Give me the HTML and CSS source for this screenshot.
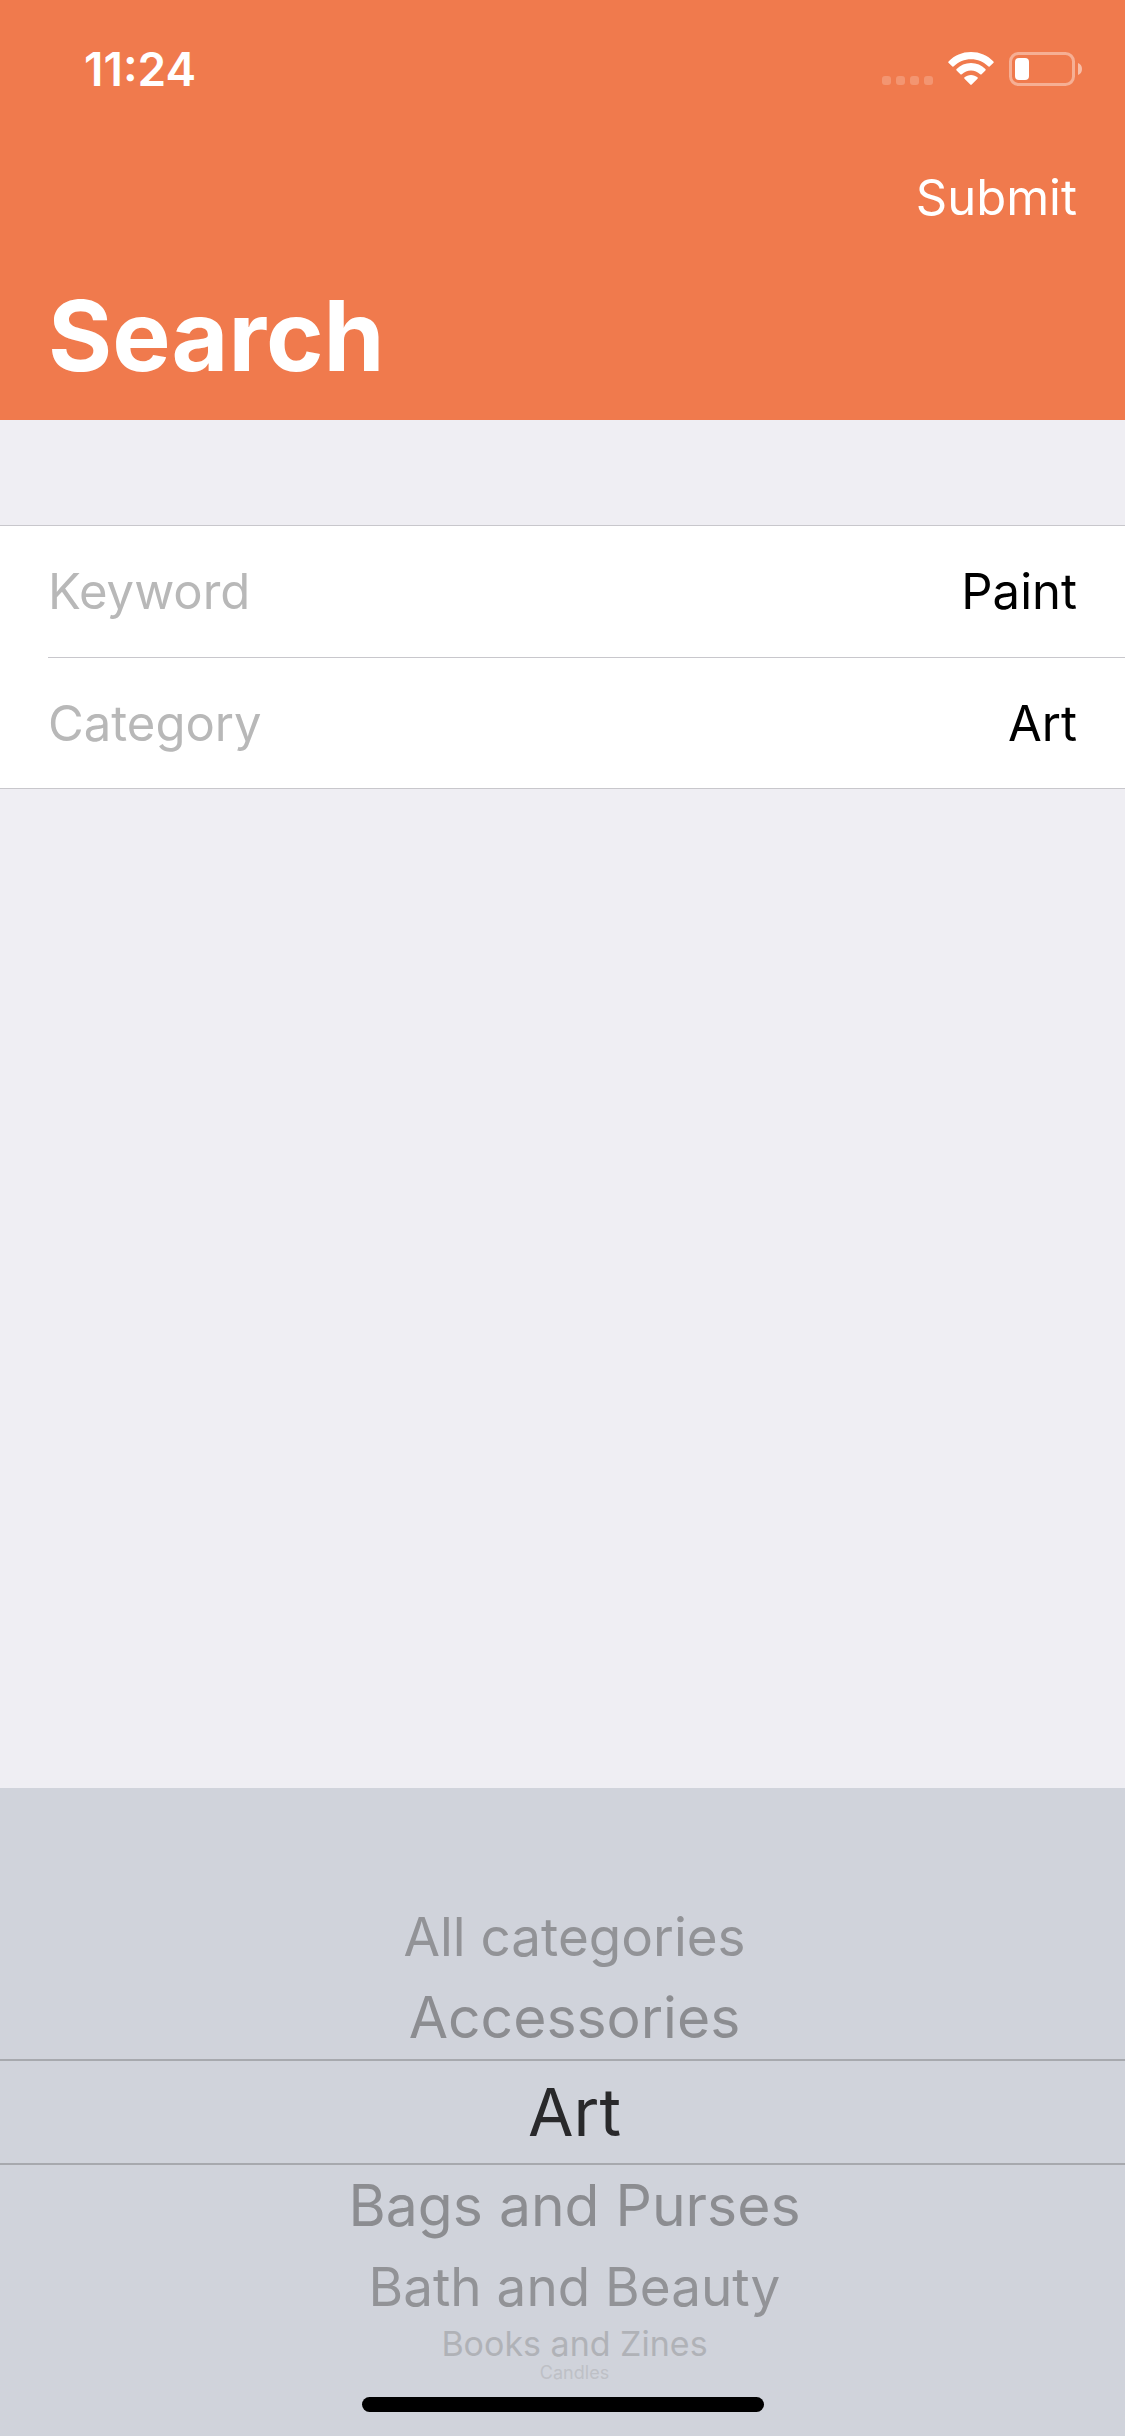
FILE: index.html
```html
<!DOCTYPE html>
<html lang="en">
<head>
<meta charset="utf-8">
<meta name="viewport" content="width=device-width, initial-scale=1">
<title>Search</title>
<link rel="stylesheet" href="styles.css">
</head>
<body>
<form class="screen">
  <header class="header">
    <div class="status">
      <time class="clock">11:24</time>
      <div class="indicators">
        <svg class="dots" viewBox="0 0 51 34" aria-hidden="true">
          <g fill="#fff" opacity=".2">
            <rect x="0" y="24" width="9" height="9" rx="3"/>
            <rect x="14" y="24" width="9" height="9" rx="3"/>
            <rect x="28" y="24" width="9" height="9" rx="3"/>
            <rect x="42" y="24" width="9" height="9" rx="3"/>
          </g>
        </svg>
        <svg class="wifi" viewBox="0 0 46 34" aria-hidden="true">
          <g fill="#fff">
            <path d="M23 0C32 0 39.500 3.400 45.200 9.200Q46.200 10.100 45.300 11L41.600 14.400Q40.900 15 40.200 14.300C35.500 9.800 29.600 7.200 23 7.200S10.500 9.800 5.800 14.300Q5.100 15 4.400 14.400L.7 11Q-.2 10.100 .8 9.200C6.500 3.400 14 0 23 0Z"/>
            <path d="M23 11C28.700 11 33.600 13.200 37.400 16.900Q38.200 17.700 37.400 18.400L33.600 22.200Q32.900 22.800 32.200 22.200C29.600 19.900 26.500 18.500 23 18.500S16.400 19.900 13.800 22.200Q13.100 22.800 12.400 22.200L8.600 18.400Q7.800 17.700 8.600 16.900C12.400 13.200 17.300 11 23 11Z"/>
            <path d="M23 22.900C25.500 22.900 27.800 23.800 29.500 25.300Q30.200 26 29.500 26.700L23.700 32.600Q23 33.300 22.300 32.600L16.500 26.700Q15.800 26 16.500 25.300C18.200 23.800 20.500 22.900 23 22.900Z"/>
          </g>
        </svg>
        <svg class="battery" viewBox="0 0 74 34" aria-hidden="true">
          <rect x="1.500" y="1.500" width="63" height="31" rx="8" fill="none" stroke="#fff" stroke-opacity=".4" stroke-width="3"/>
          <rect x="6" y="6" width="14" height="22" rx="4" fill="#fff"/>
          <path d="M69 11Q73 12.500 73 17T69 23Z" fill="#fff" fill-opacity=".5"/>
        </svg>
      </div>
    </div>
    <div class="toolbar"><button class="submit" type="submit">Submit</button></div>
    <h1 class="title">Search</h1>
  </header>
  <main class="fields">
    <div class="field">
      <label class="field-label" for="keyword">Keyword</label>
      <input class="field-value" id="keyword" type="text" value="Paint">
    </div>
    <div class="field">
      <label class="field-label" for="category">Category</label>
      <input class="field-value" id="category" type="text" value="Art" readonly>
    </div>
  </main>
  <footer class="picker">
    <div class="wheel" role="radiogroup" aria-label="Category">
      <label class="option far"><input class="choice" type="radio" name="choice">All categories</label>
      <label class="option near"><input class="choice" type="radio" name="choice">Accessories</label>
      <label class="option selected"><input class="choice" type="radio" name="choice" checked>Art</label>
      <label class="option near"><input class="choice" type="radio" name="choice">Bags and Purses</label>
      <label class="option far"><input class="choice" type="radio" name="choice">Bath and Beauty</label>
      <label class="option edge"><input class="choice" type="radio" name="choice">Books and Zines</label>
      <label class="option last"><input class="choice" type="radio" name="choice">Candles</label>
    </div>
    <div class="home-bar"></div>
  </footer>
</form>
</body>
</html>
```
FILE: styles.css
```css
*, *::before, *::after {
  box-sizing: border-box;
}

body {
  margin: 0;
  font-family: Inter, "Liberation Sans", sans-serif;
  font-size: 49px;
  color: #000;
  background: #efeef3;
}

.screen {
  display: flex;
  flex-direction: column;
  min-height: 100vh;
}

/* Header */
.header {
  padding: 38px 48px 24px;
  color: #fff;
  background: #f07a4d;
}

.status {
  display: flex;
  align-items: center;
  justify-content: space-between;
  height: 62px;
  padding: 0 0 0 36px;
}

.clock {
  font-size: 46px;
  font-weight: 600;
  line-height: 62px;
}

.indicators {
  display: flex;
  gap: 15px;
  margin-right: -6px;
}

.dots {
  width: 51px;
  height: 34px;
}

.wifi {
  width: 46px;
  height: 34px;
}

.battery {
  width: 74px;
  height: 34px;
}

.toolbar {
  display: flex;
  justify-content: flex-end;
  padding: 68px 0 48px;
}

.submit {
  padding: 0;
  border: 0;
  font: inherit;
  line-height: 60px;
  color: inherit;
  background: none;
}

.title {
  margin: 0;
  font-size: 98px;
  font-weight: 700;
  line-height: 120px;
}

/* Form rows */
.fields {
  margin-top: 105px;
  border: solid #c8c7cc;
  border-width: 1px 0;
  background: #fff;
}

.field {
  display: flex;
  align-items: center;
  height: 131px;
  margin-left: 48px;
  padding-right: 48px;
}

.field + .field {
  border-top: 1px solid #c8c7cc;
}

.field-label {
  color: #b8b8b8;
}

.field-value {
  flex: 1;
  min-width: 0;
  padding: 0;
  border: 0;
  outline: 0;
  font: inherit;
  color: inherit;
  text-align: right;
  background: none;
}

/* Category picker */
.picker {
  display: flex;
  flex-direction: column;
  align-items: center;
  margin-top: auto;
  padding: 109px 0 24px;
  background: #d0d3db;
}

.wheel {
  display: flex;
  flex-direction: column;
  width: 100%;
  margin-bottom: 12px;
}

.option {
  padding-left: 24px;
  text-align: center;
  white-space: nowrap;
}

.choice {
  position: absolute;
  appearance: none;
  margin: 0;
  opacity: 0;
}

.near {
  font-size: 57px;
  line-height: 82px;
  color: #8c8d91;
}

.far {
  font-size: 53px;
  line-height: 80px;
  color: #929397;
}

.selected {
  border: solid #a7a9ae;
  border-width: 2px 0;
  font-size: 66px;
  line-height: 102px;
  color: #29292b;
}

.edge {
  font-size: 34px;
  line-height: 34px;
  color: #b0b2b7;
}

.last {
  font-size: 18px;
  line-height: 24px;
  color: #bec0c6;
}

.home-bar {
  width: 402px;
  height: 15px;
  border-radius: 8px;
  background: #000;
}
```
